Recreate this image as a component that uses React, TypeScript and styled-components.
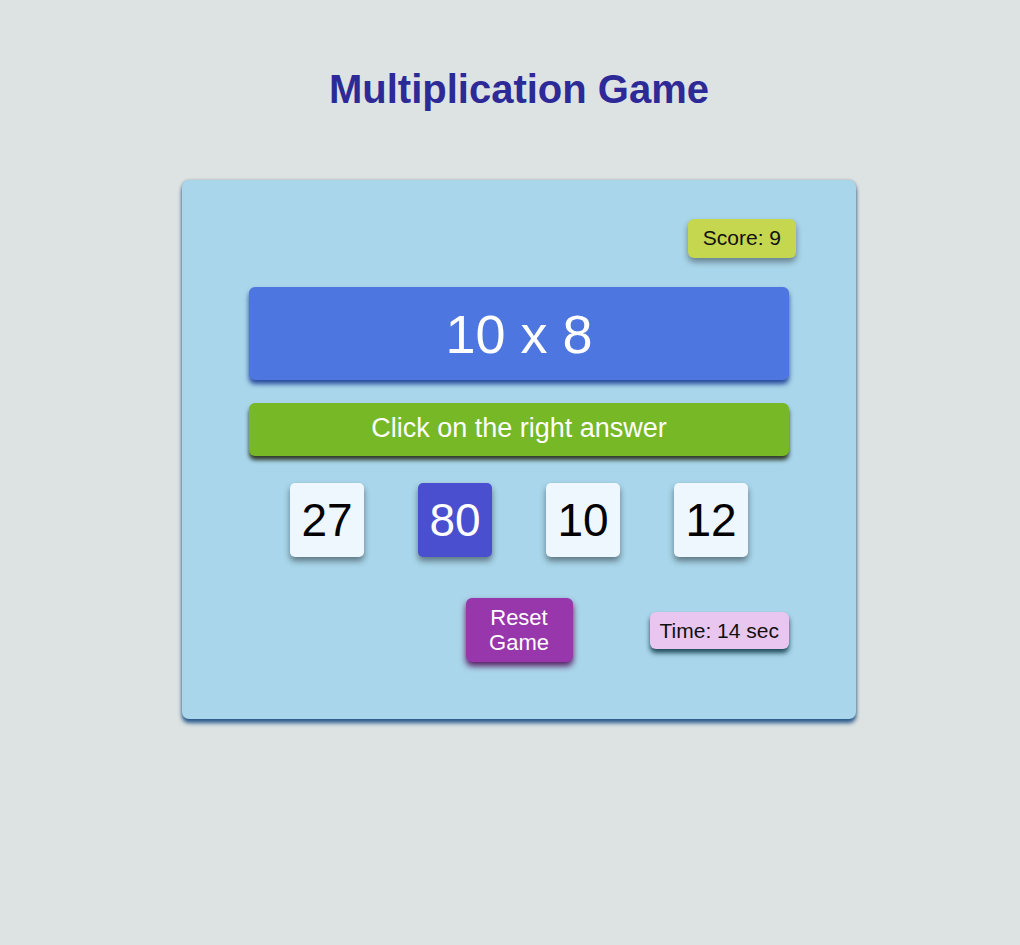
import React, { useState } from 'react';
import styled, { createGlobalStyle } from 'styled-components';

const GlobalStyle = createGlobalStyle`
  body {
    margin: 0;
    background: #dde3e3;
    font-family: 'Liberation Sans', Arial, sans-serif;
  }
`;

const choices = [27, 80, 10, 12];

function App() {
  const [picked, setPicked] = useState<number | null>(80);

  return (
    <>
      <GlobalStyle />
      <Page>
        <Title>Multiplication Game</Title>
        <Card>
          <Score>Score: 9</Score>
          <Question>10 x 8</Question>
          <Instruction>Click on the right answer</Instruction>
          <Choices>
            {choices.map((c) => (
              <Choice key={c} $active={picked === c} onClick={() => setPicked(c)}>
                {c}
              </Choice>
            ))}
          </Choices>
          <BottomRow>
            <ResetButton onClick={() => setPicked(null)}>Reset Game</ResetButton>
            <Timer>Time: 14 sec</Timer>
          </BottomRow>
        </Card>
      </Page>
    </>
  );
}

export default App;

// Styled Components
const Page = styled.div`
  display: flex;
  flex-direction: column;
  align-items: center;
  padding: 67px 0 80px 18px;
`;

const Title = styled.h1`
  margin: 0 0 68px;
  font-size: 40px;
  font-weight: 700;
  color: #2d2a98;
`;

const Card = styled.div`
  width: 674px;
  box-sizing: border-box;
  padding: 39px 67px 57px;
  display: flex;
  flex-direction: column;
  background: #a9d6eb;
  border-radius: 7px;
  box-shadow: 0 4px 4px #27598a, 0 0 3px rgba(0, 0, 0, 0.25);
`;

const Score = styled.div`
  align-self: flex-end;
  margin-right: -7px;
  margin-bottom: 29px;
  padding: 7px 15px 8px;
  font-size: 21px;
  line-height: 24px;
  color: #111;
  background: #c5d64f;
  border-radius: 6px;
  box-shadow: 0 4px 6px rgba(0, 0, 0, 0.4);
`;

const Question = styled.div`
  height: 93px;
  display: flex;
  align-items: center;
  justify-content: center;
  font-size: 54px;
  color: #fff;
  background: #4e76e0;
  border-radius: 6px;
  box-shadow: 0 4px 5px #27489a;
`;

const Instruction = styled.div`
  margin-top: 23px;
  height: 53px;
  display: flex;
  align-items: center;
  justify-content: center;
  padding-bottom: 3px;
  box-sizing: border-box;
  font-size: 27px;
  color: #fff;
  background: #76b826;
  border-radius: 6px;
  box-shadow: 0 4px 4px #2f3a2a;
`;

const Choices = styled.div`
  margin-top: 27px;
  display: flex;
  justify-content: center;
  gap: 54px;
`;

const Choice = styled.button<{ $active: boolean }>`
  width: 74px;
  height: 74px;
  padding: 0;
  border: none;
  display: flex;
  align-items: center;
  justify-content: center;
  font-family: inherit;
  font-size: 46px;
  cursor: pointer;
  color: ${(p) => (p.$active ? '#fff' : '#000')};
  background: ${(p) => (p.$active ? '#4a4fcf' : '#eef7fe')};
  border-radius: 5px;
  box-shadow: 0 4px 6px rgba(0, 0, 0, 0.45);
`;

const BottomRow = styled.div`
  margin-top: 41px;
  display: grid;
  grid-template-columns: 1fr auto 1fr;
  align-items: center;
`;

const ResetButton = styled.button`
  grid-column: 2;
  width: 107px;
  height: 64px;
  padding: 0 10px;
  border: none;
  font-family: inherit;
  font-size: 22px;
  line-height: 25px;
  color: #fff;
  background: #9836ab;
  border-radius: 6px;
  cursor: pointer;
  box-shadow: 0 4px 6px #56195f;
`;

const Timer = styled.div`
  grid-column: 3;
  justify-self: end;
  padding: 7px 10px;
  font-size: 21px;
  line-height: 23px;
  color: #111;
  background: #e9c6ef;
  border-radius: 6px;
  box-shadow: 0 4px 5px #1f4b5a;
`;
